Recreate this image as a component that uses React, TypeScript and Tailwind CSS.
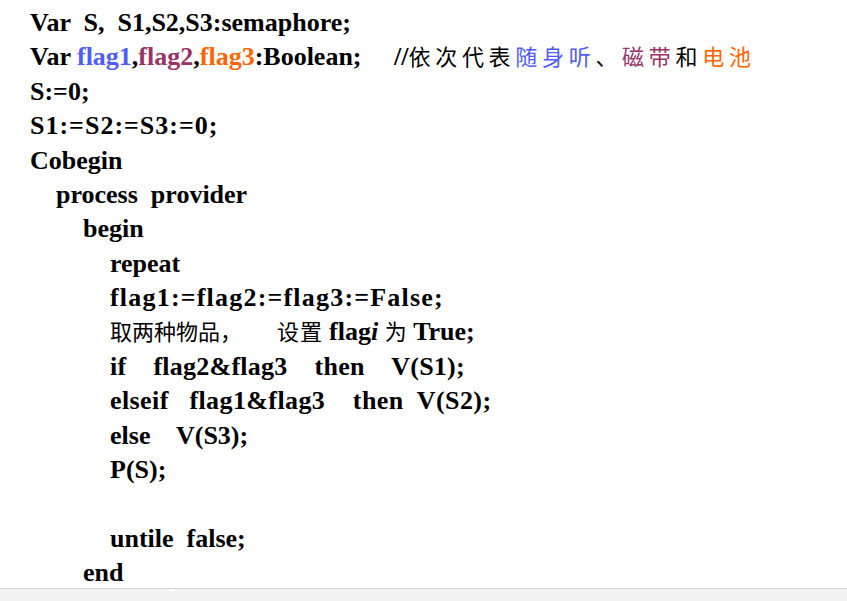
import React from 'react';

const blue = 'text-[#4f5cff]';
const plum = 'text-[#993366]';
const orange = 'text-[#ff6600]';

function Zh({ children, className = '' }: { children: React.ReactNode; className?: string }) {
  return (
    <span className={`font-normal leading-none text-[22px] font-['Noto_Sans_CJK_SC',sans-serif] ${className}`}>
      {children}
    </span>
  );
}

function Line({ level = 0, className = '', children }: { level?: number; className?: string; children?: React.ReactNode }) {
  const pads = ['pl-[30px]', 'pl-[56px]', 'pl-[83px]', 'pl-[110px]'];
  return <div className={`${pads[level]} h-[34.375px] whitespace-pre ${className}`}>{children}</div>;
}

export default function App() {
  return (
    <div className="w-[847px] h-[601px] bg-white flex flex-col overflow-hidden text-black">
      {/* Code listing */}
      <div className="flex-1 min-h-0 overflow-hidden pt-[6px] font-['Liberation_Serif',serif] font-bold text-[26px] leading-[34.375px]">
        <Line>Var  S,  S1,S2,S3:semaphore;</Line>
        <Line>
          Var <span className={blue}>flag1</span>,<span className={plum}>flag2</span>,
          <span className={orange}>flag3</span>:Boolean;     //
          <Zh className="tracking-[4.7px]">
            依次代表<span className={blue}>随身听</span>、<span className={plum}>磁带</span>和
            <span className={orange}>电池</span>
          </Zh>
        </Line>
        <Line>S:=0;</Line>
        <Line className="tracking-[1px]">S1:=S2:=S3:=0;</Line>
        <Line>Cobegin</Line>
        <Line level={1}>process  provider</Line>
        <Line level={2}>begin</Line>
        <Line level={3}>repeat</Line>
        <Line level={3} className="tracking-[1.2px]">flag1:=flag2:=flag3:=False;</Line>
        <Line level={3}>
          <Zh>取两种物品，</Zh>
          <Zh className="ml-[35px] tracking-[1px]">设置</Zh>
          <span className="ml-[6px]">flag</span>
          <i>i</i> <Zh>为</Zh> True;
        </Line>
        <Line level={3} className="tracking-[0.25px]">if    flag2&amp;flag3    then    V(S1);</Line>
        <Line level={3} className="tracking-[0.4px]">elseif   flag1&amp;flag3    then  V(S2);</Line>
        <Line level={3}>else    V(S3);</Line>
        <Line level={3}>P(S);</Line>
        <Line level={3} />
        <Line level={3}>untile  false;</Line>
        <Line level={2}>end</Line>
      </div>

      {/* Bottom strip */}
      <div className="h-[13px] shrink-0 bg-[#f2f2f2] border-t border-[#d4d4d4] pl-[168px]">
        <svg width="7" height="4" viewBox="0 0 7 4" className="block">
          <path d="M0 0 L7 0 L3.5 4 Z" fill="#ffffff" />
        </svg>
      </div>
    </div>
  );
}
